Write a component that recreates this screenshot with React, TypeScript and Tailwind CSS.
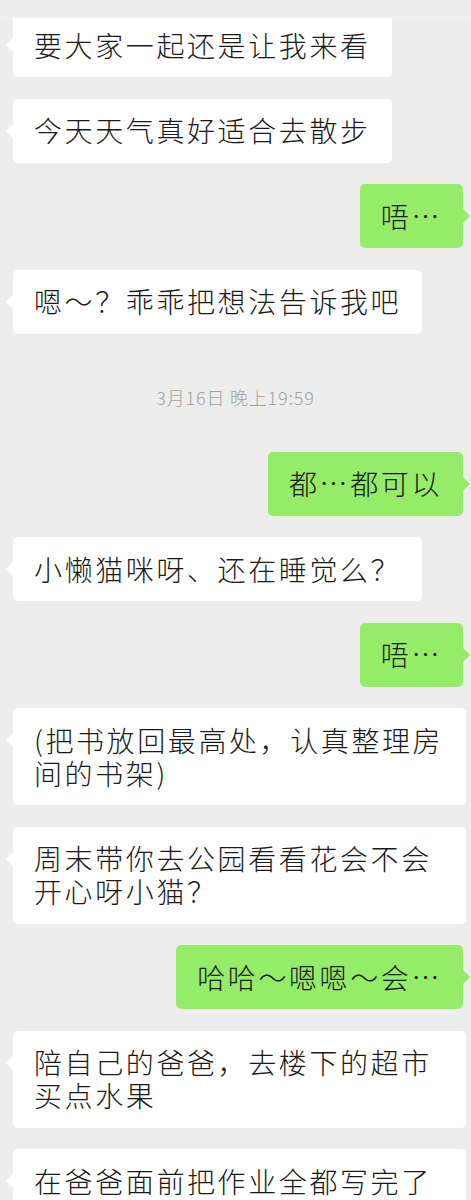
import React from 'react';

type Msg =
  | { kind: 'in' | 'out'; text: string }
  | { kind: 'time'; text: string };

// Texto neutro com o mesmo comprimento das mensagens originais
const messages: Msg[] = [
  { kind: 'in', text: '要大家一起还是让我来看' },
  { kind: 'in', text: '今天天气真好适合去散步' },
  { kind: 'out', text: '唔…' },
  { kind: 'in', text: '嗯～？乖乖把想法告诉我吧' },
  { kind: 'time', text: '3月16日 晚上19:59' },
  { kind: 'out', text: '都…都可以' },
  { kind: 'in', text: '小懒猫咪呀、还在睡觉么？' },
  { kind: 'out', text: '唔…' },
  { kind: 'in', text: '(把书放回最高处，认真整理房间的书架)' },
  { kind: 'in', text: '周末带你去公园看看花会不会开心呀小猫？' },
  { kind: 'out', text: '哈哈～嗯嗯～会…' },
  { kind: 'in', text: '陪自己的爸爸，去楼下的超市买点水果' },
  { kind: 'in', text: '在爸爸面前把作业全都写完了呢，真棒' },
];

const Bubble: React.FC<{ side: 'in' | 'out'; text: string }> = ({ side, text }) => {
  const isIn = side === 'in';
  return (
    <div className={`flex ${isIn ? 'justify-start pl-[13px]' : 'justify-end pr-[8px]'}`}>
      <div
        className={`relative max-w-[453px] rounded-[5px] px-[21px] py-[15.5px] text-[28px] font-light leading-[33px] tracking-[2.6px] text-[#1a1a1a] ${
          isIn ? 'bg-white' : 'bg-[#95ec69]'
        }`}
      >
        <span
          className={`absolute top-[27px] h-[10px] w-[10px] rotate-45 ${
            isIn ? 'left-[-5px] bg-white' : 'right-[-5px] bg-[#95ec69]'
          }`}
        />
        <span className="relative">{text}</span>
      </div>
    </div>
  );
};

const App: React.FC = () => {
  return (
    <div
      className="relative h-[1200px] w-[471px] overflow-hidden bg-[#ededed]"
      style={{ fontFamily: '"Noto Sans CJK SC", "Noto Sans", sans-serif' }}
    >
      <div className="relative z-10 h-[18px] border-b border-[#f4f4f4] bg-[#ededed]" />
      <div className="-mt-[5px] flex flex-col gap-[21.5px]">
        {messages.map((m, i) =>
          m.kind === 'time' ? (
            <div
              key={i}
              className="pt-[32px] pb-[23px] text-center text-[18px] font-light leading-[20px] tracking-[0.8px] text-[#a2a2a2]"
            >
              {m.text}
            </div>
          ) : (
            <Bubble key={i} side={m.kind} text={m.text} />
          )
        )}
      </div>
    </div>
  );
};

export default App;
